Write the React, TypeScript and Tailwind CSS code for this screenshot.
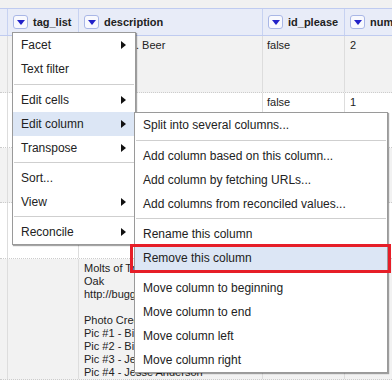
import React from "react";

// Column dropdown button (blue down triangle)
const DropButton = () => (
  <span className="flex h-[14px] w-[15px] shrink-0 items-center justify-center rounded-[3px] border border-[#a9b7e6] bg-[#f8f9fe]">
    <svg width="8" height="5" viewBox="0 0 8 5">
      <polygon points="0,0 8,0 4,5" fill="#2222c8" />
    </svg>
  </span>
);

const Arrow = () => (
  <svg width="5" height="8" viewBox="0 0 5 8">
    <polygon points="0,0 5,4 0,8" fill="#111" />
  </svg>
);

interface ItemProps {
  label: string;
  sub?: boolean;
  active?: boolean;
}

const Item: React.FC<ItemProps> = ({ label, sub, active }) => (
  <div
    className={`flex h-6 items-center justify-between pl-2 pr-[9px] text-[12px] text-[#222] whitespace-nowrap ${
      active ? "bg-[#dce6f5]" : ""
    }`}
  >
    <span>{label}</span>
    {sub && <Arrow />}
  </div>
);

const Sep = ({ wide }: { wide?: boolean }) => (
  <div className={wide ? "py-[3px]" : "pt-[2px] pb-[3px]"}>
    <div className="mx-px h-px bg-[#cfcfcf]" />
  </div>
);

const HeaderCell = ({ label, w }: { label: string; w: string }) => (
  <div className={`flex items-center gap-[5px] overflow-hidden border-r border-[#c7d2f1] pl-[5px] ${w}`}>
    <DropButton />
    <span className="whitespace-nowrap text-[11px] font-bold text-[#222]">{label}</span>
  </div>
);

interface RowProps {
  h: string;
  gray?: boolean;
  desc?: string[];
  idp?: string;
  num?: string;
}

const Row: React.FC<RowProps> = ({ h, gray, desc = [], idp = "", num = "" }) => (
  <div
    className={`flex border-b border-dotted border-[#cccccc] text-[11px] leading-[13px] text-[#222] ${h} ${
      gray ? "bg-[#f2f2f2]" : "bg-white"
    }`}
  >
    <div className="w-[8px] shrink-0 border-r border-[#dddddd]" />
    <div className="w-[71px] shrink-0 border-r border-[#dddddd]" />
    <div className="w-[184px] shrink-0 overflow-hidden border-r border-[#dddddd] pl-[5px] pt-[3px]">
      {desc.map((line, i) => (
        <div key={i} className="h-[13px] whitespace-nowrap">
          {line}
        </div>
      ))}
    </div>
    <div className="w-[82px] shrink-0 border-r border-[#dddddd] pl-[4px] pt-[3px]">{idp}</div>
    <div className="flex-1 pl-[5px] pt-[3px]">{num}</div>
  </div>
);

export default function App() {
  return (
    <div className="relative flex h-[380px] w-[392px] flex-col overflow-hidden bg-[#f2f2f2] font-['Liberation_Sans',Arial,sans-serif]">
      <div className="h-2 shrink-0 bg-[#f1f1f1]" />

      {/* header */}
      <div className="flex h-[28px] shrink-0 border-y border-[#bfcbf0] bg-[#e8ecf8]">
        <div className="w-[8px] shrink-0 border-r border-[#c7d2f1]" />
        <HeaderCell label="tag_list" w="w-[71px] shrink-0" />
        <HeaderCell label="description" w="w-[184px] shrink-0" />
        <HeaderCell label="id_please" w="w-[82px] shrink-0" />
        <HeaderCell label="num_pics" w="flex-1 border-r-0" />
      </div>

      {/* rows */}
      <Row h="h-[59px]" gray desc={["Brewer Co. Beer"]} idp="false" num="2" />
      <Row h="h-[56px]" desc={["Nymph"]} idp="false" num="1" />
      <Row h="h-[57px]" gray />
      <Row h="h-[57px]" />
      <Row
        h="flex-1"
        gray
        desc={[
          "Molts of Treehoppers on Live",
          "Oak",
          "http://bugguide.net/node/view/",
          "",
          "Photo Credits:",
          "Pic #1 - Bill Anderson",
          "Pic #2 - Bill Anderson",
          "Pic #3 - Jesse Anderson",
          "Pic #4 - Jesse Anderson",
        ]}
      />

      {/* column menu */}
      <div className="absolute left-[12px] top-[32px] w-[124px] border border-[#9a9a9a] bg-white shadow-[1px_1px_1px_rgba(0,0,0,0.35)]">
        <Item label="Facet" sub />
        <Item label="Text filter" />
        <Sep wide />
        <Item label="Edit cells" sub />
        <Item label="Edit column" sub active />
        <Item label="Transpose" sub />
        <Sep />
        <Item label="Sort..." />
        <Item label="View" sub />
        <Sep />
        <Item label="Reconcile" sub />
      </div>

      {/* submenu */}
      <div className="absolute left-[134px] top-[112px] w-[254px] border border-[#9a9a9a] bg-white shadow-[1px_1px_1px_rgba(0,0,0,0.35)]">
        <Item label="Split into several columns..." />
        <Sep wide />
        <Item label="Add column based on this column..." />
        <Item label="Add column by fetching URLs..." />
        <Item label="Add columns from reconciled values..." />
        <Sep />
        <Item label="Rename this column" />
        <Item label="Remove this column" active />
        <Sep />
        <Item label="Move column to beginning" />
        <Item label="Move column to end" />
        <Item label="Move column left" />
        <Item label="Move column right" />
      </div>

      {/* highlight annotation */}
      <div className="absolute left-[130px] top-[244px] h-[29px] w-[261px] border-[3px] border-[#e61e28]" />
    </div>
  );
}
